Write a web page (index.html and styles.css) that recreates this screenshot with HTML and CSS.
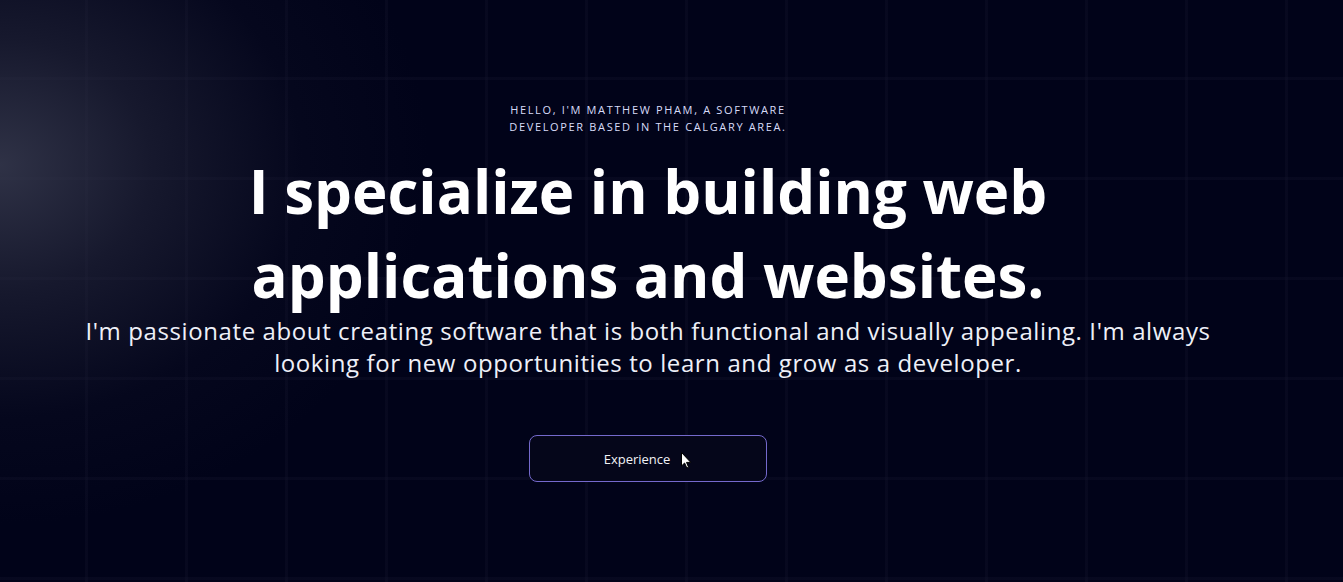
FILE: index.html
```html
<!DOCTYPE html>
<html lang="en">
<head>
<meta charset="utf-8">
<title>Matthew Pham</title>
<link rel="stylesheet" href="styles.css">
</head>
<body>
<main class="hero">
  <div class="glow"></div>
  <div class="content">
    <p class="eyebrow">Hello, I'm Matthew Pham, a software developer based in the Calgary area.</p>
    <h1 class="title">I specialize in building web applications and websites.</h1>
    <p class="lead">I'm passionate about creating software that is both functional and visually appealing. I'm always looking for new opportunities to learn and grow as a developer.</p>
    <div class="actions">
      <button class="btn">Experience
        <svg class="cursor" width="11" height="17" viewBox="0 0 11 17"><path d="M0.5 0.5 L0.5 14 L3.6 11 L5.8 16 L7.6 15.2 L5.5 10.4 L9.8 10.4 Z" fill="#fff" stroke="#000" stroke-width="1"/></svg>
      </button>
    </div>
  </div>
</main>
</body>
</html>
```
FILE: styles.css
```css
* { box-sizing: border-box; }
html, body { margin: 0; padding: 0; }
body {
  background: #010319;
  font-family: "Open Sans", "Noto Sans", sans-serif;
  color: #fff;
  height: 582px;
  overflow: hidden;
}
.hero {
  position: relative;
  height: 582px;
  background-color: #010319;
  background-image:
    linear-gradient(to right, rgba(22,24,48,0.28) 0, rgba(22,24,48,0.28) 3px, transparent 3px),
    linear-gradient(to bottom, rgba(22,24,48,0.28) 0, rgba(22,24,48,0.28) 3px, transparent 3px);
  background-size: 100px 100px;
  background-position: 85px 77px;
}
.glow {
  position: absolute;
  inset: 0;
  background: radial-gradient(ellipse 430px 360px at 0px 165px, rgba(55,58,78,0.85) 0%, rgba(40,42,62,0.55) 35%, rgba(20,22,44,0.22) 70%, rgba(1,3,25,0) 100%);
  pointer-events: none;
}
.content {
  position: relative;
  display: flex;
  flex-direction: column;
  align-items: center;
  padding: 101px 47px 0 0;
  text-align: center;
}
.eyebrow {
  margin: 0;
  width: 300px;
  font-size: 11px;
  line-height: 17px;
  letter-spacing: 1.65px;
  text-transform: uppercase;
  color: #d8dcf8;
}
.title {
  margin: 14px 0 0;
  width: 900px;
  font-size: 60px;
  line-height: 84px;
  font-weight: 700;
  color: #fff;
}
.lead {
  margin: -2px 0 0;
  width: 1160px;
  font-size: 24px;
  line-height: 32px;
  color: #eef0f8;
  letter-spacing: 0.6px;
}
.actions {
  margin-top: 56px;
}
.btn {
  position: relative;
  width: 238px;
  height: 47px;
  padding: 0 22px 0 0;
  border-radius: 8px;
  border: 1px solid #7469cc;
  background: #05061a;
  color: #f2f2f6;
  font-family: inherit;
  font-size: 13px;
}
.cursor {
  position: absolute;
  left: 151px;
  top: 16px;
}
```
